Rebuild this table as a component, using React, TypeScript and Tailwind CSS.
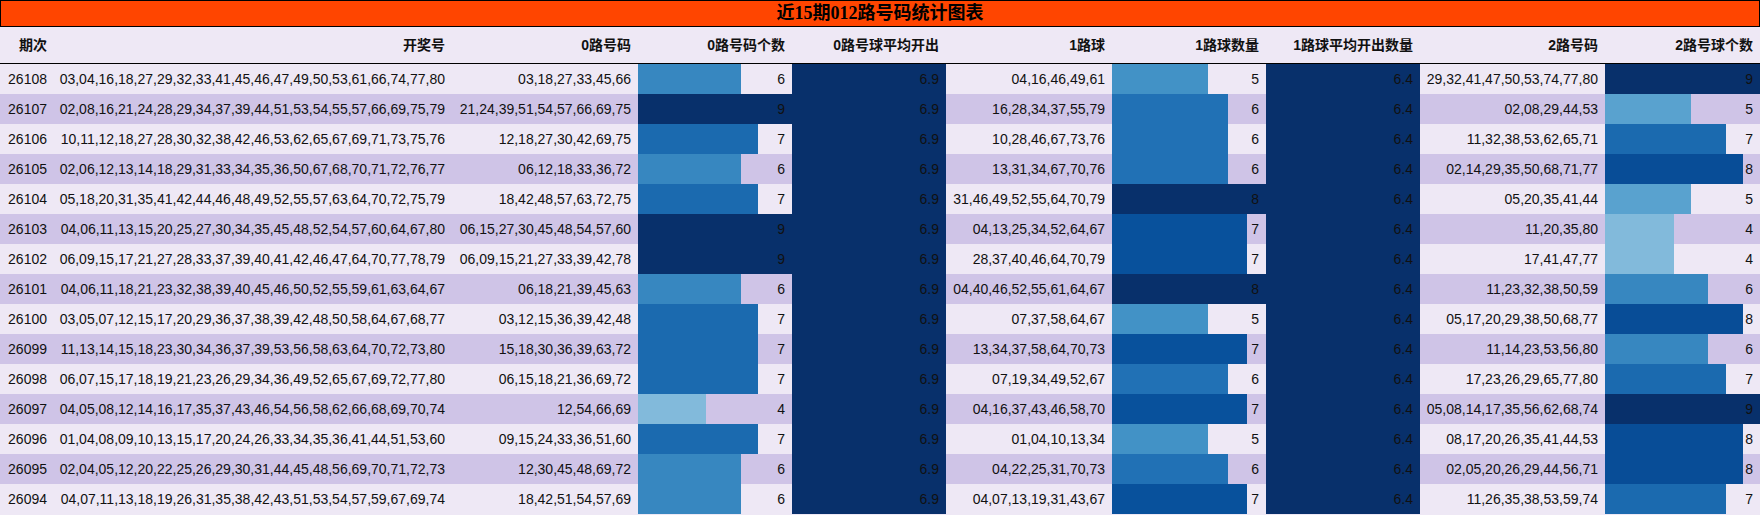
import React from 'react';

// matplotlib "Blues" stops
const BLUES = ['#f7fbff', '#deebf7', '#c6dbef', '#9ecae1', '#6baed6', '#4292c6', '#2171b5', '#08519c', '#08306b'];

const hex = (h: string) => [1, 3, 5].map((i) => parseInt(h.slice(i, i + 2), 16));

const blues = (t: number) => {
  const x = Math.max(0, Math.min(1, t)) * (BLUES.length - 1);
  const i = Math.min(Math.floor(x), BLUES.length - 2);
  const f = x - i;
  const a = hex(BLUES[i]);
  const b = hex(BLUES[i + 1]);
  const c = a.map((v, k) => Math.round(v + (b[k] - v) * f));
  return `rgb(${c[0]},${c[1]},${c[2]})`;
};

type Row = { id: string; nums: string; r0: string; r1: string; r2: string };

const rows: Row[] = [
  { id: '26108', nums: '03,04,16,18,27,29,32,33,41,45,46,47,49,50,53,61,66,74,77,80', r0: '03,18,27,33,45,66', r1: '04,16,46,49,61', r2: '29,32,41,47,50,53,74,77,80' },
  { id: '26107', nums: '02,08,16,21,24,28,29,34,37,39,44,51,53,54,55,57,66,69,75,79', r0: '21,24,39,51,54,57,66,69,75', r1: '16,28,34,37,55,79', r2: '02,08,29,44,53' },
  { id: '26106', nums: '10,11,12,18,27,28,30,32,38,42,46,53,62,65,67,69,71,73,75,76', r0: '12,18,27,30,42,69,75', r1: '10,28,46,67,73,76', r2: '11,32,38,53,62,65,71' },
  { id: '26105', nums: '02,06,12,13,14,18,29,31,33,34,35,36,50,67,68,70,71,72,76,77', r0: '06,12,18,33,36,72', r1: '13,31,34,67,70,76', r2: '02,14,29,35,50,68,71,77' },
  { id: '26104', nums: '05,18,20,31,35,41,42,44,46,48,49,52,55,57,63,64,70,72,75,79', r0: '18,42,48,57,63,72,75', r1: '31,46,49,52,55,64,70,79', r2: '05,20,35,41,44' },
  { id: '26103', nums: '04,06,11,13,15,20,25,27,30,34,35,45,48,52,54,57,60,64,67,80', r0: '06,15,27,30,45,48,54,57,60', r1: '04,13,25,34,52,64,67', r2: '11,20,35,80' },
  { id: '26102', nums: '06,09,15,17,21,27,28,33,37,39,40,41,42,46,47,64,70,77,78,79', r0: '06,09,15,21,27,33,39,42,78', r1: '28,37,40,46,64,70,79', r2: '17,41,47,77' },
  { id: '26101', nums: '04,06,11,18,21,23,32,38,39,40,45,46,50,52,55,59,61,63,64,67', r0: '06,18,21,39,45,63', r1: '04,40,46,52,55,61,64,67', r2: '11,23,32,38,50,59' },
  { id: '26100', nums: '03,05,07,12,15,17,20,29,36,37,38,39,42,48,50,58,64,67,68,77', r0: '03,12,15,36,39,42,48', r1: '07,37,58,64,67', r2: '05,17,20,29,38,50,68,77' },
  { id: '26099', nums: '11,13,14,15,18,23,30,34,36,37,39,53,56,58,63,64,70,72,73,80', r0: '15,18,30,36,39,63,72', r1: '13,34,37,58,64,70,73', r2: '11,14,23,53,56,80' },
  { id: '26098', nums: '06,07,15,17,18,19,21,23,26,29,34,36,49,52,65,67,69,72,77,80', r0: '06,15,18,21,36,69,72', r1: '07,19,34,49,52,67', r2: '17,23,26,29,65,77,80' },
  { id: '26097', nums: '04,05,08,12,14,16,17,35,37,43,46,54,56,58,62,66,68,69,70,74', r0: '12,54,66,69', r1: '04,16,37,43,46,58,70', r2: '05,08,14,17,35,56,62,68,74' },
  { id: '26096', nums: '01,04,08,09,10,13,15,17,20,24,26,33,34,35,36,41,44,51,53,60', r0: '09,15,24,33,36,51,60', r1: '01,04,10,13,34', r2: '08,17,20,26,35,41,44,53' },
  { id: '26095', nums: '02,04,05,12,20,22,25,26,29,30,31,44,45,48,56,69,70,71,72,73', r0: '12,30,45,48,69,72', r1: '04,22,25,31,70,73', r2: '02,05,20,26,29,44,56,71' },
  { id: '26094', nums: '04,07,11,13,18,19,26,31,35,38,42,43,51,53,54,57,59,67,69,74', r0: '18,42,51,54,57,69', r1: '04,07,13,19,31,43,67', r2: '11,26,35,38,53,59,74' },
];

const count = (s: string) => s.split(',').length;
const c0 = rows.map((r) => count(r.r0));
const c1 = rows.map((r) => count(r.r1));
const c2 = rows.map((r) => count(r.r2));
const max0 = Math.max(...c0);
const max1 = Math.max(...c1);
const max2 = Math.max(...c2);
const avg0 = (c0.reduce((a, b) => a + b, 0) / rows.length).toFixed(1);
const avg1 = (c1.reduce((a, b) => a + b, 0) / rows.length).toFixed(1);

const headers = ['期次', '开奖号', '0路号码', '0路号码个数', '0路号球平均开出', '1路球', '1路球数量', '1路球平均开出数量', '2路号码', '2路号球个数'];

const cols = 'grid grid-cols-[54px_398px_186px_154px_154px_166px_154px_154px_185px_155px]';

const Cell = ({ children }: { children: React.ReactNode }) => (
  <div className="flex items-center justify-end pr-[7px] whitespace-nowrap">{children}</div>
);

const BarCell = ({ value, max }: { value: number; max: number }) => (
  <div className="relative flex items-center justify-end pr-[7px]">
    <div
      className="absolute left-0 top-0 bottom-0"
      style={{ width: `${(value / max) * 100}%`, backgroundColor: blues(value / max) }}
    />
    <span className="relative">{value}</span>
  </div>
);

const AvgCell = ({ value }: { value: string }) => (
  <div className="flex items-center justify-end pr-[7px] bg-[#08306b]">{value}</div>
);

export default function App() {
  return (
    <div className="w-[1760px] h-[515px] bg-[#eee8f5] text-[#111] text-[14px]" style={{ fontFamily: '"Liberation Sans", "Noto Sans CJK SC", sans-serif' }}>
      <div
        className="h-[27px] bg-[#ff4500] border border-black flex items-center justify-center text-[18px] font-bold text-black"
        style={{ fontFamily: '"Liberation Serif", "Noto Sans CJK SC", serif' }}
      >
        近15期012路号码统计图表
      </div>
      <div className={`${cols} h-[37px] border-b border-black font-bold`}>
        {headers.map((h) => (
          <Cell key={h}>{h}</Cell>
        ))}
      </div>
      {rows.map((r, i) => (
        <div key={r.id} className={`${cols} h-[30px] ${i % 2 === 0 ? 'bg-[#eee8f5]' : 'bg-[#cfc4e7]'}`}>
          <Cell>{r.id}</Cell>
          <Cell>{r.nums}</Cell>
          <Cell>{r.r0}</Cell>
          <BarCell value={c0[i]} max={max0} />
          <AvgCell value={avg0} />
          <Cell>{r.r1}</Cell>
          <BarCell value={c1[i]} max={max1} />
          <AvgCell value={avg1} />
          <Cell>{r.r2}</Cell>
          <BarCell value={c2[i]} max={max2} />
        </div>
      ))}
    </div>
  );
}
